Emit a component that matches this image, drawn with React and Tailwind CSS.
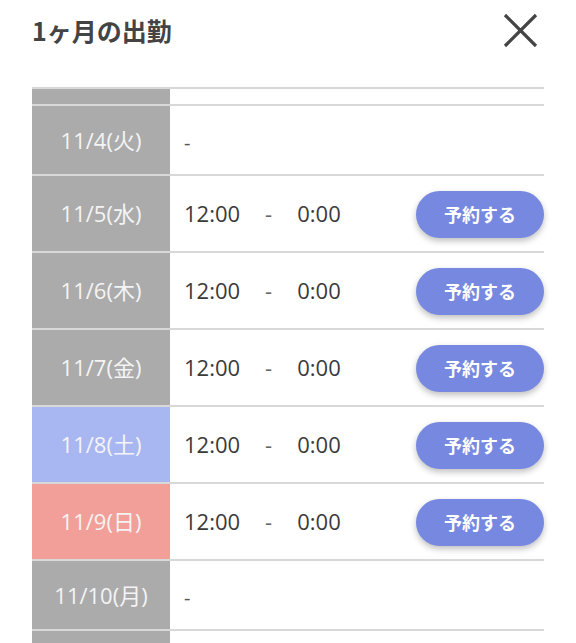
import React from "react";

const rows = [
  { date: "11/4(火)", kind: "weekday", time: null },
  { date: "11/5(水)", kind: "weekday", time: ["12:00", "0:00"] },
  { date: "11/6(木)", kind: "weekday", time: ["12:00", "0:00"] },
  { date: "11/7(金)", kind: "weekday", time: ["12:00", "0:00"] },
  { date: "11/8(土)", kind: "sat", time: ["12:00", "0:00"] },
  { date: "11/9(日)", kind: "sun", time: ["12:00", "0:00"] },
  { date: "11/10(月)", kind: "weekday", time: null },
];

const dateBg = {
  weekday: "bg-[#ababab]",
  sat: "bg-[#a8b7f2]",
  sun: "bg-[#f39f99]",
};

const font = { fontFamily: '"Open Sans", "Noto Sans CJK JP", sans-serif' };

function ShiftRow({ row }) {
  return (
    <div className="grid grid-cols-[138px_1fr] border-b-2 border-[#d8d8d8]">
      <div
        className={`${dateBg[row.kind]} flex items-center justify-center text-[22px] text-[#f4f4f4] ${
          row.time ? "h-[75px]" : "h-[68px]"
        }`}
      >
        {row.date}
      </div>
      <div className="flex items-center pl-[14px]">
        {row.time ? (
          <>
            <div className="flex items-center gap-[25px] text-[22px] text-[#3a3a3a]">
              <span>{row.time[0]}</span>
              <span className="text-[#666]">-</span>
              <span>{row.time[1]}</span>
            </div>
            <button
              className="ml-auto mt-[1px] h-[47px] w-[128px] rounded-full bg-[#7688e0] text-[18px] font-bold text-white shadow-[0_3px_6px_rgba(0,0,0,0.25)]"
              style={{ fontFamily: '"Noto Sans CJK JP", sans-serif' }}
            >
              予約する
            </button>
          </>
        ) : (
          <span className="mt-[6px] text-[20px] text-[#555]">-</span>
        )}
      </div>
    </div>
  );
}

export default function App() {
  return (
    <div className="h-[643px] w-[576px] overflow-hidden bg-white" style={font}>
      <div className="flex h-[62px] items-center justify-between pl-[32px] pr-[37px]">
        <h1
          className="text-[25px] font-bold text-[#444]"
          style={{ fontFamily: '"Noto Sans CJK JP", sans-serif' }}
        >
          1ヶ月の出勤
        </h1>
        <svg width="37" height="37" viewBox="0 0 37 37" className="-mt-[1px]">
          <path d="M3 3L34 34M34 3L3 34" stroke="#444" strokeWidth="3.2" fill="none" />
        </svg>
      </div>
      <div className="ml-[32px] mt-[25px] w-[512px]">
        <div className="grid grid-cols-[138px_1fr] border-y-2 border-[#d8d8d8]">
          <div className="h-[15px] bg-[#ababab]" />
          <div />
        </div>
        {rows.map((row) => (
          <ShiftRow key={row.date} row={row} />
        ))}
        <div className="grid grid-cols-[138px_1fr]">
          <div className="h-[40px] bg-[#ababab]" />
          <div />
        </div>
      </div>
    </div>
  );
}
